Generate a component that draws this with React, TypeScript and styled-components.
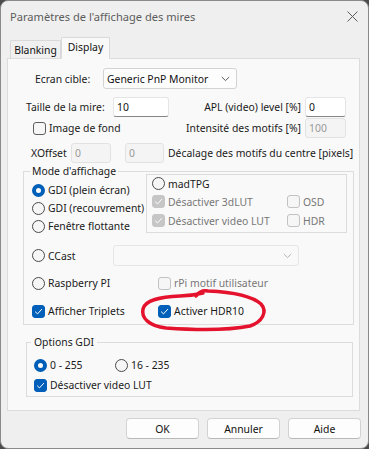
import React from "react";
import styled, { createGlobalStyle } from "styled-components";

const GlobalStyle = createGlobalStyle`
  html, body {
    margin: 0;
    padding: 0;
    background: #4b4b4b;
  }
  body {
    font-family: "Noto Sans", "Open Sans", Arial, sans-serif;
    font-size: 10.4px;
    color: #1a1a1a;
  }
  * {
    box-sizing: border-box;
  }
`;

const Check = ({ color = "#fff" }: { color?: string }) => (
  <svg width="13" height="13" viewBox="0 0 13 13">
    <path d="M3.4 6.9 L5.5 8.9 L9.6 4.4" fill="none" stroke={color} strokeWidth="1" strokeLinecap="round" strokeLinejoin="round" />
  </svg>
);

const Chevron = ({ color = "#5a5a5a" }: { color?: string }) => (
  <svg width="9" height="6" viewBox="0 0 9 6">
    <path d="M0.8 1 L4.5 4.6 L8.2 1" fill="none" stroke={color} strokeWidth="1" />
  </svg>
);

function Checkbox({ checked, disabled, label }: { checked?: boolean; disabled?: boolean; label: string }) {
  return (
    <Choice $disabled={disabled}>
      <Box $checked={checked} $disabled={disabled}>{checked && <Check />}</Box>
      {label}
    </Choice>
  );
}

function Radio({ checked, label }: { checked?: boolean; label: string }) {
  return (
    <Choice>
      <Circle $checked={checked} />
      {label}
    </Choice>
  );
}

export default function App() {
  return (
    <>
      <GlobalStyle />
      <Window>
        <TitleBar>
          <Title>Paramètres de l'affichage des mires</Title>
          <svg width="11" height="11" viewBox="0 0 11 11">
            <path d="M0.5 0.5 L10.5 10.5 M10.5 0.5 L0.5 10.5" stroke="#5c5c5c" strokeWidth="1" />
          </svg>
        </TitleBar>

        <TabStrip>
          <Tab>Blanking</Tab>
          <Tab $active>Display</Tab>
        </TabStrip>

        <Panel>
          <Row $top={9} $left={27} $h={21}>
            <Label $w={68}>Ecran cible:</Label>
            <Select $w={134}>
              Generic PnP Monitor
              <Chevron />
            </Select>
          </Row>

          <Row $top={8} $left={18} $h={20}>
            <Label $w={87}>Taille de la mire:</Label>
            <Input $w={56}>10</Input>
            <RightLabel>APL (video) level [%]</RightLabel>
            <Input $w={41}>0</Input>
          </Row>

          <Row $top={1} $left={25} $h={20}>
            <Slot $w={136}>
              <Checkbox label="Image de fond" />
            </Slot>
            <RightLabel>Intensité des motifs [%]</RightLabel>
            <Input $w={41} $disabled>100</Input>
          </Row>

          <Row $top={5} $left={23} $h={19}>
            <Label $w={40}>XOffset</Label>
            <Input $w={40} $disabled>0</Input>
            <Input $w={39} $disabled style={{ marginLeft: 14 }}>0</Input>
            <Label $gap={4}>Décalage des motifs du centre [pixels]</Label>
          </Row>

          <Group $top={2} $left={15} $w={331} $pl={8}>
            <Legend $shift={2}>Mode d'affichage</Legend>
            <TopSection>
              <RadioColumn>
                <Line><Radio checked label="GDI (plein écran)" /></Line>
                <Line><Radio label="GDI (recouvrement)" /></Line>
                <Line><Radio label="Fenêtre flottante" /></Line>
              </RadioColumn>
              <InnerBox>
                <Line $h={17}><Radio label="madTPG" /></Line>
                <Line $h={19}>
                  <Slot $w={135}><Checkbox checked disabled label="Désactiver 3dLUT" /></Slot>
                  <Checkbox disabled label="OSD" />
                </Line>
                <Line $h={19}>
                  <Slot $w={135}><Checkbox checked disabled label="Désactiver video LUT" /></Slot>
                  <Checkbox disabled label="HDR" />
                </Line>
              </InnerBox>
            </TopSection>

            <Line $top={12} $h={21}>
              <Slot $w={81}><Radio label="CCast" /></Slot>
              <Select $w={186} $disabled>
                <span />
                <Chevron color="#b5b5b5" />
              </Select>
            </Line>
            <Line $top={8}>
              <Slot $w={126}><Radio label="Raspberry PI" /></Slot>
              <Checkbox disabled label="rPi motif utilisateur" />
            </Line>
            <Line $top={10}>
              <Slot $w={126}><Checkbox checked label="Afficher Triplets" /></Slot>
              <Checkbox checked label="Activer HDR10" />
            </Line>
          </Group>

          <Group $top={10} $left={18} $w={327} $pl={7} $pb={2}>
            <Legend $shift={3}>Options GDI</Legend>
            <Line $top={7}>
              <Slot $w={81}><Radio checked label="0 - 255" /></Slot>
              <Radio label="16 - 235" />
            </Line>
            <Line $top={2}>
              <Checkbox checked label="Désactiver video LUT" />
            </Line>
          </Group>

          <Scribble viewBox="7 58 353 353" width="353" height="353">
            <path
              d="M196 296 C199 292, 203 290, 208 291 C230 292, 252 296, 261 304 C268 312, 262 322, 250 326 C230 330, 195 330, 166 328 C149 326, 141 318, 143 309 C145 300, 160 297, 180 296 C188 296, 195 295, 203 293"
              fill="none"
              stroke="#e4122c"
              strokeWidth="3.5"
              strokeLinecap="round"
              strokeLinejoin="round"
            />
          </Scribble>
        </Panel>

        <Footer>
          <Button>OK</Button>
          <Button>Annuler</Button>
          <Button>Aide</Button>
        </Footer>
      </Window>
    </>
  );
}

const Window = styled.div`
  width: 369px;
  height: 449px;
  background: #efefef;
  border: 1px solid #8a8a8a;
  border-radius: 8px;
  overflow: hidden;
  display: flex;
  flex-direction: column;
`;

const TitleBar = styled.div`
  height: 30px;
  display: flex;
  align-items: center;
  justify-content: space-between;
  padding: 0 10px 0 9px;
`;

const Title = styled.div`
  font-size: 11.1px;
  color: #5c5c5c;
`;

const TabStrip = styled.div`
  height: 28px;
  display: flex;
  align-items: flex-end;
  padding-left: 9px;
  margin-bottom: -1px;
  position: relative;
  z-index: 1;
`;

const Tab = styled.div<{ $active?: boolean }>`
  width: ${(p) => (p.$active ? 49 : 51)}px;
  height: ${(p) => (p.$active ? 22 : 19)}px;
  display: flex;
  align-items: center;
  justify-content: center;
  padding-bottom: ${(p) => (p.$active ? 2 : 0)}px;
  background: ${(p) => (p.$active ? "#f9f9f9" : "#f0f0f0")};
  border: 1px solid #d9d9d9;
  border-bottom: 1px solid ${(p) => (p.$active ? "#f9f9f9" : "#dcdcdc")};
  border-radius: 2px 2px 0 0;
  color: #111;
`;

const Panel = styled.div`
  position: relative;
  margin-left: 6px;
  width: 353px;
  height: 353px;
  background: #f9f9f9;
  border: 1px solid #dcdcdc;
`;

const Row = styled.div<{ $top: number; $left: number; $h: number }>`
  display: flex;
  align-items: center;
  margin-top: ${(p) => p.$top}px;
  padding-left: ${(p) => p.$left}px;
  height: ${(p) => p.$h}px;
`;

const Label = styled.span<{ $w?: number; $gap?: number }>`
  ${(p) => (p.$w ? `width: ${p.$w}px; flex: none;` : "")}
  margin-left: ${(p) => p.$gap || 0}px;
  white-space: nowrap;
`;

const RightLabel = styled.span`
  width: 136px;
  flex: none;
  text-align: right;
  padding-right: 4px;
  white-space: nowrap;
`;

const Slot = styled.div<{ $w: number }>`
  width: ${(p) => p.$w}px;
  flex: none;
  display: flex;
  align-items: center;
`;

const Input = styled.div<{ $w: number; $disabled?: boolean }>`
  width: ${(p) => p.$w}px;
  height: 20px;
  flex: none;
  display: flex;
  align-items: center;
  padding-left: 3px;
  border: 1px solid ${(p) => (p.$disabled ? "#e2e2e2" : "#e5e5e5")};
  border-bottom-color: ${(p) => (p.$disabled ? "#e2e2e2" : "#868686")};
  border-radius: 3px;
  background: ${(p) => (p.$disabled ? "#f4f4f4" : "#ffffff")};
  color: ${(p) => (p.$disabled ? "#9a9a9a" : "#111")};
`;

const Select = styled.div<{ $w: number; $disabled?: boolean }>`
  width: ${(p) => p.$w}px;
  height: 21px;
  flex: none;
  display: flex;
  align-items: center;
  justify-content: space-between;
  padding: 0 6px 0 3px;
  border: 1px solid ${(p) => (p.$disabled ? "#e6e6e6" : "#d3d3d3")};
  border-radius: 3px;
  background: ${(p) => (p.$disabled ? "#f9f9f9" : "#fdfdfd")};
  color: #111;
`;

const Choice = styled.span<{ $disabled?: boolean }>`
  display: inline-flex;
  align-items: center;
  white-space: nowrap;
  color: ${(p) => (p.$disabled ? "#777777" : "#1a1a1a")};
`;

const Box = styled.span<{ $checked?: boolean; $disabled?: boolean }>`
  width: 13px;
  height: 13px;
  margin-right: 3px;
  border-radius: 3px;
  flex: none;
  display: flex;
  border: 1px solid
    ${(p) => (p.$checked ? (p.$disabled ? "#c6c6c6" : "#005fb8") : p.$disabled ? "#c2c2c2" : "#5e5e5e")};
  background: ${(p) => (p.$checked ? (p.$disabled ? "#c6c6c6" : "#005fb8") : "#f6f6f6")};
  & > svg {
    margin: -1px;
  }
`;

const Circle = styled.span<{ $checked?: boolean }>`
  width: 13px;
  height: 13px;
  margin-right: 3px;
  flex: none;
  border-radius: 50%;
  border: ${(p) => (p.$checked ? "4px solid #005fb8" : "1px solid #4a4a4a")};
  background: ${(p) => (p.$checked ? "#ffffff" : "#f6f6f6")};
`;

const Group = styled.fieldset<{ $top: number; $left: number; $w: number; $pl: number; $pb?: number }>`
  margin: ${(p) => p.$top}px 0 0 ${(p) => p.$left}px;
  width: ${(p) => p.$w}px;
  min-width: 0;
  padding: 0 6px ${(p) => (p.$pb === undefined ? 4 : p.$pb)}px ${(p) => p.$pl}px;
  border: 1px solid #dcdcdc;
  border-radius: 0;
`;

const Legend = styled.legend<{ $shift: number }>`
  padding: 0 ${(p) => p.$shift}px;
  margin-left: -${(p) => p.$shift}px;
  line-height: 14px;
  color: #1a1a1a;
`;

const TopSection = styled.div`
  display: flex;
  margin-top: -4px;
  height: 59px;
`;

const RadioColumn = styled.div`
  width: 114px;
  padding-top: 7px;
  display: flex;
  flex-direction: column;
`;

const InnerBox = styled.div`
  width: 201px;
  border: 1px solid #dcdcdc;
  padding-left: 5px;
  display: flex;
  flex-direction: column;
`;

const Line = styled.div<{ $top?: number; $h?: number }>`
  display: flex;
  align-items: center;
  height: ${(p) => p.$h || 18}px;
  margin-top: ${(p) => p.$top || 0}px;
  flex: none;
`;

const Scribble = styled.svg`
  position: absolute;
  left: -1px;
  top: -1px;
  pointer-events: none;
`;

const Footer = styled.div`
  display: flex;
  justify-content: flex-end;
  gap: 8px;
  padding: 7px 7px 0 0;
`;

const Button = styled.div`
  width: 73px;
  height: 21px;
  display: flex;
  align-items: center;
  justify-content: center;
  background: #fdfdfd;
  border: 1px solid #d2d2d2;
  border-bottom-color: #b9b9b9;
  border-radius: 4px;
  color: #111;
`;
